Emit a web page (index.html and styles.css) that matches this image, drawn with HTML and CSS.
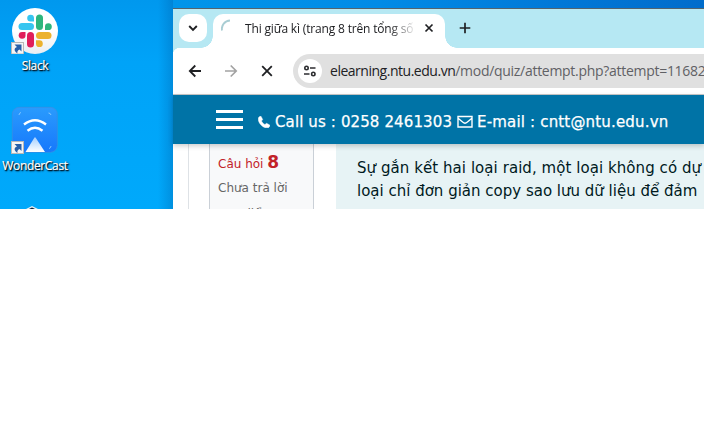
FILE: index.html
```html
<!DOCTYPE html>
<html lang="vi">
<head>
<meta charset="utf-8">
<title>Thi giữa kì</title>
<link rel="stylesheet" href="styles.css">
</head>
<body>
<div class="screen">
  <aside class="desktop">
    <div class="shortcut slack">
      <svg width="70" height="54" viewBox="0 0 70 54">
        <defs><linearGradient id="disc" x2="0" y2="1"><stop offset=".5" stop-color="#fff"/><stop offset="1" stop-color="#e9edf2"/></linearGradient></defs>
        <circle cx="35" cy="31" r="23" fill="url(#disc)"/>
        <g fill="#36c5f0"><rect x="18.5" y="23" width="15.5" height="7" rx="3.5"/><path d="M34 21.5h-3.2a3.4 3.4 0 1 1 3.2-3.4z"/></g>
        <g fill="#2eb67d"><rect x="36" y="14.5" width="7" height="15.5" rx="3.5"/><path d="M45 30v-3.5a3.4 3.4 0 1 1 3.4 3.5z"/></g>
        <g fill="#ecb22e"><rect x="36" y="32" width="15.5" height="7" rx="3.5"/><path d="M36 40.3h3.4a3.4 3.4 0 1 1-3.4 3.4z"/></g>
        <g fill="#e01e5a"><rect x="27" y="32" width="7" height="15.5" rx="3.5"/><path d="M25.5 32v3.5a3.4 3.4 0 1 1-3.4-3.5z"/></g>
        <rect x="11.5" y="42.5" width="12" height="11.5" fill="#f5f5f5" stroke="#b8b8b8"/>
        <path d="M14.5 44.5h7V51.5l-2-2c-2 1-2.400 2-2 4-4-2.500-3.500-5.500-.5-6.500z" fill="#2860a8"/>
      </svg>
      <span>Slack</span>
    </div>
    <div class="shortcut cast">
      <svg width="70" height="48" viewBox="0 0 70 48">
        <defs><linearGradient id="tile" x2="0" y2="1"><stop stop-color="#2a9bfd"/><stop offset="1" stop-color="#1678fc"/></linearGradient>
        <linearGradient id="beam" x2="0" y2="1"><stop stop-color="#a5d0ff"/><stop offset="1" stop-color="#fff"/></linearGradient></defs>
        <rect x="12.3" y="1.3" width="45" height="45" rx="7" fill="url(#tile)" stroke="#3d8de0" stroke-width=".7"/>
        <path d="M24 18.500q11-8.500 22 0M27.500 24.800q7.500-6 15 0" fill="none" stroke="#fff" stroke-width="2.400"/>
        <path d="M34.500 31.500q.5-.5 1 0L45 46H25.500z" fill="url(#beam)"/>
        <path d="M19 11q0-2 2-2.500M48.500 9q2 0 2.500 2M51 42q0 2-2 2.500" transform="translate(0 -2)" fill="none" stroke="#83c8ff"/>
        <rect x="11.5" y="35.5" width="12" height="12" fill="#f5f5f5" stroke="#b8b8b8"/>
        <path d="M14.500 38h7v7l-2-2c-2 1-2.400 2-2 4-4-2.500-3.500-5.500-.5-6.500z" fill="#2860a8"/>
      </svg>
      <span>WonderCast</span>
    </div>
    <svg class="peek" width="70" height="5" viewBox="0 0 70 5"><path d="M22 6l10-5 10 5z" fill="#e8edf2"/><path d="M25 6l7-3.500 7 3.500z" fill="#10243c"/></svg>
  </aside>
  <main class="window">
    <div class="tabs">
      <div class="tab-search"><svg width="12" height="10" viewBox="0 0 12 10"><path d="M2.200 3l3.800 3.800L9.800 3" fill="none" stroke="#1f2023" stroke-width="1.900"/></svg></div>
      <div class="tab">
        <svg class="spinner" width="18" height="18" viewBox="0 0 18 18"><path d="M1 11.500A8.500 8.500 0 0 1 9 1.500" fill="none" stroke="#a9cdd3" stroke-width="1.900"/></svg>
        <span class="title">Thi giữa kì (trang 8 trên tổng số</span>
        <svg class="close" width="10" height="10" viewBox="0 0 10 10"><path d="M1.500 1.500l7 7M8.500 1.500l-7 7" stroke="#1f2023" stroke-width="1.700"/></svg>
      </div>
      <svg class="plus" width="12" height="12" viewBox="0 0 12 12"><path d="M6 .7v10.600M.7 6h10.600" stroke="#1f2023" stroke-width="1.700"/></svg>
    </div>
    <div class="toolbar">
      <svg class="tool back" width="14" height="14" viewBox="0 0 14 14"><path d="M13 7H2M7.300 1.500L1.800 7l5.500 5.500" fill="none" stroke="#1f2023" stroke-width="1.800"/></svg>
      <svg class="tool" width="14" height="14" viewBox="0 0 14 14"><path d="M1 7h11M6.700 1.500L12.200 7l-5.500 5.500" fill="none" stroke="#a2a2a2" stroke-width="1.700"/></svg>
      <svg class="tool stop" width="12" height="12" viewBox="0 0 12 12"><path d="M1.200 1.200l9.600 9.600M10.800 1.200l-9.600 9.600" stroke="#1f2023" stroke-width="1.800"/></svg>
      <div class="address">
        <div class="site"><svg width="14" height="12" viewBox="0 0 14 12" fill="none" stroke="#2c2d30" stroke-width="1.600"><circle cx="3.500" cy="3" r="1.700"/><path d="M7 3h5.500M1 9h5.500"/><circle cx="10.300" cy="9" r="1.700"/></svg></div>
        <span class="url"><b>elearning.ntu.edu.vn</b><i>/mod/quiz/attempt.php?attempt=11682</i></span>
      </div>
    </div>
    <header class="banner">
      <div class="menu"><i></i><i></i><i></i></div>
      <svg class="phone" width="12" height="12" viewBox="0 0 12 12"><path d="M.4 2C.8.700 2 .1 3 .2l1.700 3.200c.1.500-1.200 1.200-1.200 1.600C4.100 6.400 5.600 7.900 7 8.500c.5 0 1.100-1.200 1.600-1.200l3.200 1.700c.3.900-.4 2.300-1.600 2.700C5.500 13-.8 6.600.4 2z" fill="#fff" stroke="#fff" stroke-width=".4"/></svg>
      <span class="call">Call us : 0258 2461303</span>
      <svg class="mail" width="16" height="13" viewBox="0 0 16 13"><path d="M1 1.500h14v10.500H1zM1.300 3.500C4 5.500 6.500 8.200 8 8.200s4-2.700 6.700-4.700" fill="none" stroke="#fff" stroke-width="1.400"/></svg>
      <span class="email">E-mail : cntt@ntu.edu.vn</span>
    </header>
    <section class="quiz">
      <div class="content">
        <div class="info">
          <p class="number">Câu hỏi <strong>8</strong></p>
          <p class="state">Chưa trả lời</p>
          <p class="grade">Đạt điểm</p>
        </div>
        <div class="question">
          <p class="q1">Sự gắn kết hai loại raid, một loại không có dự</p>
          <p class="q2">loại chỉ đơn giản copy sao lưu dữ liệu để đảm</p>
        </div>
      </div>
    </section>
  </main>
</div>
</body>
</html>
```
FILE: styles.css
```css
* { box-sizing: border-box; }
body { margin: 0; background: #fff; overflow: hidden; }
p { margin: 0; white-space: nowrap; }
svg { display: block; flex: none; }
.screen {
  width: 704px; height: 209px; display: flex; overflow: hidden;
  background: linear-gradient(90deg, #009df2 0, #0095ea 173px, #008be6 380px, #0078d7 560px, #006ccb 704px);
}
.desktop { width: 173px; flex: none; background: linear-gradient(90deg, transparent 158px, rgba(0,70,140,.25)), linear-gradient(180deg, #0098ee, #00a3f8 30%, #00a9fb); }
.shortcut { width: 70px; display: flex; flex-direction: column; align-items: center; font: 12px/16px "Open Sans", "Noto Sans", sans-serif; color: #fff; text-shadow: 1px 1px 2px #000, 1px 1px 1px #001c38; }
.shortcut span { margin-top: 4px; white-space: nowrap; letter-spacing: -.35px; -webkit-text-stroke: .2px #fff; }
.slack { height: 106px; }
.cast { height: 99px; }
.window { flex: 1; min-width: 0; margin-top: 8px; border-top: 1px solid #53646e; background: #fff; }
.tabs { height: 39px; display: flex; background: #b6e8f3; padding: 5px 0 0 6px; }
.tab-search { width: 28px; height: 28px; flex: none; border-radius: 10px; background: #fff; display: flex; align-items: center; justify-content: center; }
.tab { position: relative; margin-left: 6px; width: 232px; height: 34px; flex: none; border-radius: 10px 10px 0 0; background: #fff; display: flex; padding: 9px 0 0 8px; }
.tab::before, .tab::after { content: ""; position: absolute; bottom: 0; width: 12px; height: 12px; }
.tab::before { left: -12px; background: radial-gradient(circle at 0 0, transparent 11.5px, #fff 12px); }
.tab::after { right: -12px; background: radial-gradient(circle at 100% 0, transparent 11.5px, #fff 12px); }
.spinner { margin-top: -4px; }
.title { width: 168px; margin: -4px 11px 0 6px; overflow: hidden; white-space: nowrap; font: 12px/20px "Open Sans", sans-serif; color: #202124; letter-spacing: -.17px; -webkit-mask-image: linear-gradient(90deg, #000 144px, transparent 172px); }
.plus { margin: 8px 0 0 14px; }
.toolbar { height: 47px; display: flex; align-items: center; padding-left: 16px; background: radial-gradient(circle at 7px 7px, #fff 7px, #b6e8f3 7.500px) 0 0 / 7px 7px no-repeat, #fff; border-bottom: 1px solid #c8c8c8; }
.tool { margin-right: 22px; }
.back { margin-left: -1px; }
.stop { margin: 0 20px 0 1px; }
.address { flex: 1; min-width: 0; height: 34px; border-radius: 17px 0 0 17px; background: #e0e0e0; display: flex; align-items: center; padding-left: 5px; }
.site { width: 24px; height: 24px; flex: none; border-radius: 50%; background: #fff; display: flex; align-items: center; justify-content: center; }
.url { margin-left: 8px; white-space: nowrap; font: 14px/24px "Open Sans", sans-serif; color: #202124; }
.url b { font-weight: 400; letter-spacing: -.48px; }
.url i { font-style: normal; color: #606165; letter-spacing: -.29px; }
.banner { position: relative; height: 49px; display: flex; align-items: center; padding: 4px 0 0 43px; background: #0073a6; color: #fff; box-shadow: 0 2px 5px rgba(0,0,0,.2); font: 15px/20px "DejaVu Sans", sans-serif; white-space: nowrap; -webkit-text-stroke: .25px #fff; }
.menu { width: 27px; height: 19px; display: flex; flex-direction: column; justify-content: space-between; margin: -4px 15px 0 0; }
.menu i { height: 3px; background: #fff; }
.phone { margin-right: 5px; }
.call { letter-spacing: .12px; }
.email { letter-spacing: .17px; }
.mail { margin: 0 4px 0 5px; }
.quiz { height: 65px; padding-left: 15px; overflow: hidden; }
.content { height: 65px; border-left: 1px solid #dee2e6; padding-left: 20px; display: flex; }
.info { width: 105px; flex: none; border: solid #cad0d7; border-width: 0 1px; background: #f8f9fa; padding: 8px 0 0 8px; font: 12px/24px "DejaVu Sans", sans-serif; color: #666; }
.number { height: 24px; color: #c22228; }
.number strong { font-size: 17px; line-height: 20px; }
.state { height: 26px; }
.question { flex: 1; min-width: 0; margin-left: 22px; padding: 13px 0 0 21px; overflow: hidden; background: #e7f3f5; color: #001a1e; font: 15px/23px "DejaVu Sans", sans-serif; }
.q1 { letter-spacing: .06px; }
```
